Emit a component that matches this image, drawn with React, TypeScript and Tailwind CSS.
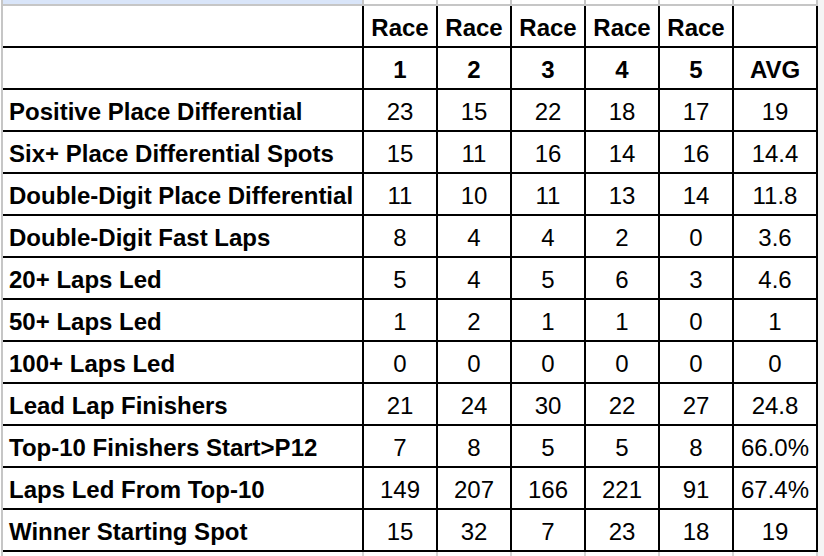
import React from 'react';

const rows: [string, string[]][] = [
  ['Positive Place Differential', ['23', '15', '22', '18', '17', '19']],
  ['Six+ Place Differential Spots', ['15', '11', '16', '14', '16', '14.4']],
  ['Double-Digit Place Differential', ['11', '10', '11', '13', '14', '11.8']],
  ['Double-Digit Fast Laps', ['8', '4', '4', '2', '0', '3.6']],
  ['20+ Laps Led', ['5', '4', '5', '6', '3', '4.6']],
  ['50+ Laps Led', ['1', '2', '1', '1', '0', '1']],
  ['100+ Laps Led', ['0', '0', '0', '0', '0', '0']],
  ['Lead Lap Finishers', ['21', '24', '30', '22', '27', '24.8']],
  ['Top-10 Finishers Start>P12', ['7', '8', '5', '5', '8', '66.0%']],
  ['Laps Led From Top-10', ['149', '207', '166', '221', '91', '67.4%']],
  ['Winner Starting Spot', ['15', '32', '7', '23', '18', '19']],
];

const widths = ['w-[74px]', 'w-[74px]', 'w-[74px]', 'w-[74px]', 'w-[74px]', 'w-[84px]'];

const Row = ({ label, cells, bold }: { label: string; cells: string[]; bold?: boolean }) => (
  <div className="flex h-[42px] border-b-2 border-black">
    <div className="w-[361px] border-r-2 border-black flex items-center pt-[4px] pl-[6px] font-bold">
      {label}
    </div>
    {cells.map((c, i) => (
      <div
        key={i}
        className={`${widths[i]} border-r-2 border-black flex items-center justify-center pt-[4px] ${bold ? 'font-bold' : ''}`}
      >
        {c}
      </div>
    ))}
  </div>
);

const App = () => {
  return (
    <div className="w-[824px] h-[556px] flex bg-[#f5f5f5] overflow-hidden text-black text-[24px] font-['Liberation_Sans',Arial,sans-serif]">
      <div className="w-[1px] bg-white" />
      <div className="w-[2px] bg-[#c6c6c6]" />
      <div className="w-[815px] flex flex-col bg-white">
        {/* sheet column header strip */}
        <div className="flex h-[4px]">
          <div className="w-[361px] bg-[#d9e5f9] border-r-2 border-[#c6c6c6]" />
          {widths.map((w, i) => (
            <div key={i} className={`${w} border-r-2 border-[#c6c6c6]`} />
          ))}
        </div>
        <div className="h-[2px] bg-[#c6c6c6]" />

        <Row label="" cells={['Race', 'Race', 'Race', 'Race', 'Race', '']} bold />
        <Row label="" cells={['1', '2', '3', '4', '5', 'AVG']} bold />
        {rows.map(([label, cells]) => (
          <Row key={label} label={label} cells={cells} />
        ))}

        <div className="flex flex-1">
          <div className="w-[361px] border-r-2 border-[#d6d6d6]" />
          {widths.map((w, i) => (
            <div key={i} className={`${w} border-r-2 border-[#d6d6d6]`} />
          ))}
        </div>
      </div>
    </div>
  );
};

export default App;
